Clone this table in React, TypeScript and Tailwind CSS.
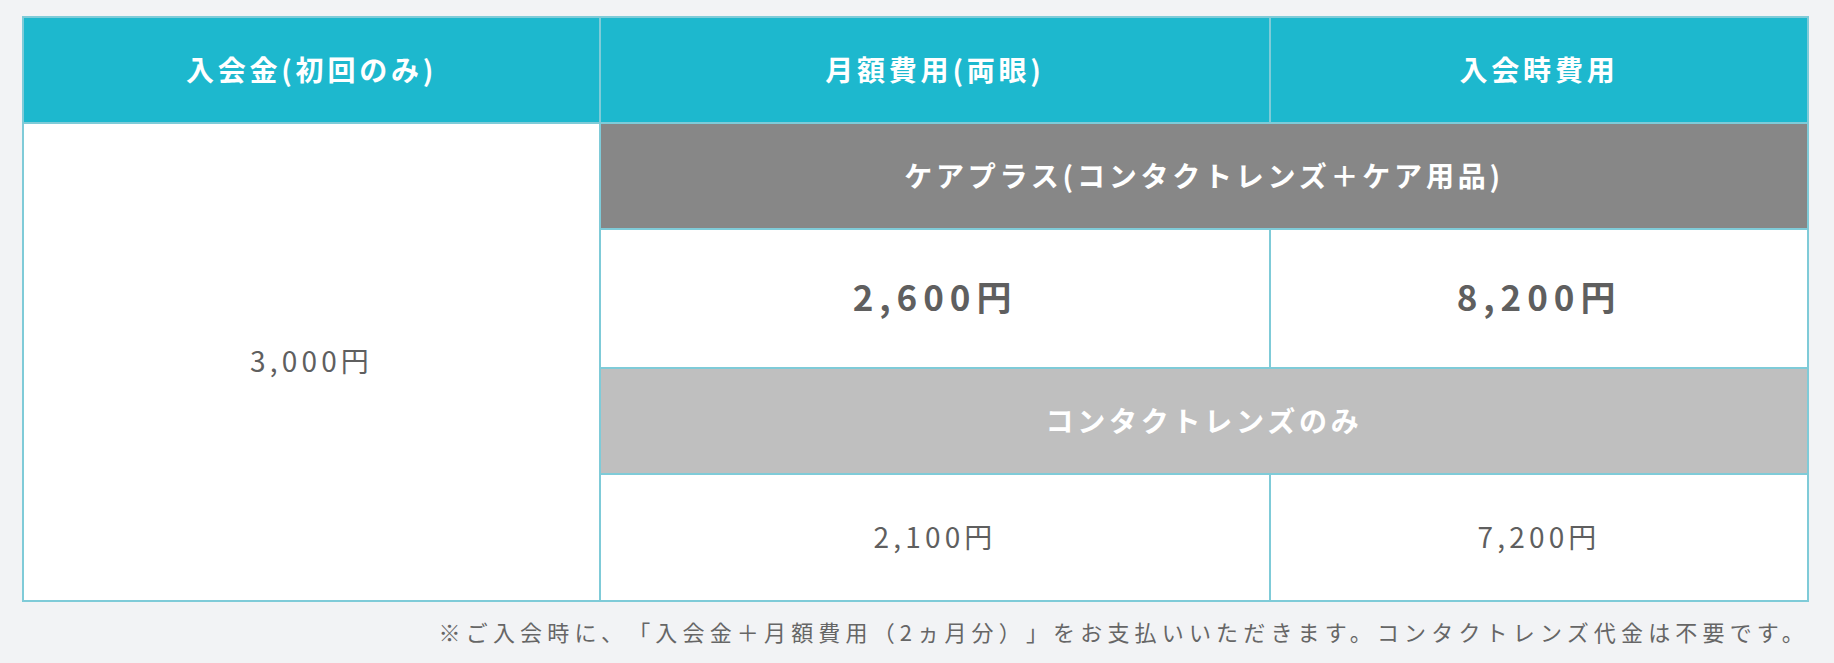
import React from 'react';

const FONT = { fontFamily: '"Noto Sans CJK JP", "Noto Sans", sans-serif' };

function HeadCell({ children }: { children: React.ReactNode }) {
  return (
    <div className="flex items-center justify-center bg-[#1db8ce] pb-[3px] text-[28px] font-bold tracking-[0.135em] text-white">
      {children}
    </div>
  );
}

function PlanRow({ label, tone }: { label: string; tone: 'dark' | 'light' }) {
  return (
    <div
      className={`col-span-2 flex items-center justify-center pb-[3px] text-[28px] font-bold tracking-[0.135em] text-white ${
        tone === 'dark' ? 'bg-[#878787]' : 'bg-[#bfbfbf]'
      }`}
    >
      {label}
    </div>
  );
}

function PriceCell({ value, strong }: { value: string; strong?: boolean }) {
  return (
    <div
      className={`flex items-center justify-center bg-white pb-[4px] text-[#5f5f5f] ${
        strong ? 'text-[35px] font-bold tracking-[0.17em]' : 'text-[28px] tracking-[0.15em]'
      }`}
    >
      {value}
    </div>
  );
}

export default function App() {
  return (
    <div className="min-h-[663px] bg-[#f2f3f5] pt-4 pl-[22px] pr-[25px]" style={FONT}>
      {/* Price table */}
      <div className="grid grid-cols-[575px_668px_536px] grid-rows-[104px_104px_137px_104px_125px] gap-[2px] border-2 border-[#7fcbd8] bg-[#7fcbd8]">
        <HeadCell>入会金(初回のみ)</HeadCell>
        <HeadCell>月額費用(両眼)</HeadCell>
        <HeadCell>入会時費用</HeadCell>

        <div className="row-span-4 flex items-center justify-center bg-white pb-[4px] text-[28px] tracking-[0.15em] text-[#5f5f5f]">
          3,000円
        </div>
        <PlanRow label="ケアプラス(コンタクトレンズ＋ケア用品)" tone="dark" />
        <PriceCell value="2,600円" strong />
        <PriceCell value="8,200円" strong />
        <PlanRow label="コンタクトレンズのみ" tone="light" />
        <PriceCell value="2,100円" />
        <PriceCell value="7,200円" />
      </div>

      <p className="mt-[11px] text-right text-[22px] leading-[36px] tracking-[0.235em] text-[#666] [text-spacing-trim:space-all]">
        ※ご入会時に、「入会金＋月額費用（2ヵ月分）」をお支払いいただきます。コンタクトレンズ代金は不要です。
      </p>
    </div>
  );
}
